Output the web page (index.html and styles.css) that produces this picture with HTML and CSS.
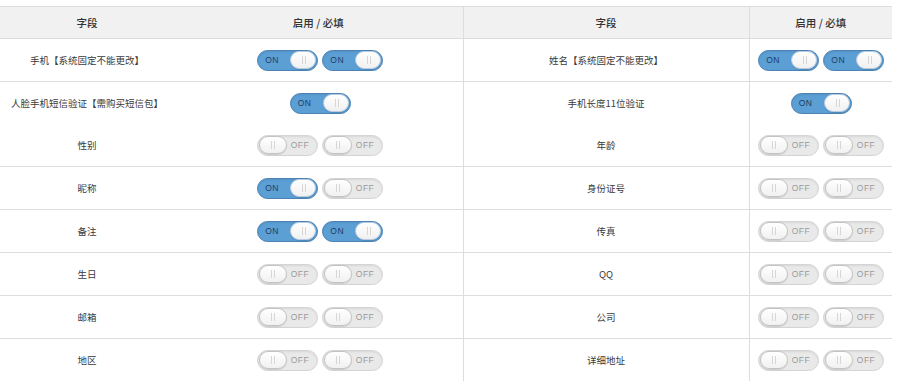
FILE: index.html
```html
<!DOCTYPE html>
<html lang="zh-CN">
  <head>
    <meta charset="UTF-8" />
    <meta name="viewport" content="width=device-width, initial-scale=1.0" />
    <title>字段设置</title>
    <link rel="stylesheet" href="styles.css">
  </head>
  <body>
    <table class="fields">
      <colgroup>
        <col class="c-name" />
        <col class="c-sw" />
        <col class="c-name2" />
        <col class="c-sw2" />
      </colgroup>
      <thead>
        <tr>
          <th>字段</th>
          <th class="split">启用 / 必填</th>
          <th class="split">字段</th>
          <th>启用 / 必填</th>
        </tr>
      </thead>
      <tbody>
        <tr>
          <td>手机【系统固定不能更改】</td>
          <td class="split sw">
            <span class="switch on"><span class="txt">ON</span><span class="knob"></span></span>
            <span class="switch on"><span class="txt">ON</span><span class="knob"></span></span>
          </td>
          <td class="split">姓名【系统固定不能更改】</td>
          <td class="sw2">
            <span class="switch on"><span class="txt">ON</span><span class="knob"></span></span>
            <span class="switch on"><span class="txt">ON</span><span class="knob"></span></span>
          </td>
        </tr>
        <tr class="no-line">
          <td>人脸手机短信验证【需购买短信包】</td>
          <td class="split sw">
            <span class="switch on"><span class="txt">ON</span><span class="knob"></span></span>
          </td>
          <td class="split">手机长度11位验证</td>
          <td class="sw2">
            <span class="switch on"><span class="txt">ON</span><span class="knob"></span></span>
          </td>
        </tr>
        <tr>
          <td>性别</td>
          <td class="split sw">
            <span class="switch"><span class="knob"></span><span class="txt">OFF</span></span>
            <span class="switch"><span class="knob"></span><span class="txt">OFF</span></span>
          </td>
          <td class="split">年龄</td>
          <td class="sw2">
            <span class="switch"><span class="knob"></span><span class="txt">OFF</span></span>
            <span class="switch"><span class="knob"></span><span class="txt">OFF</span></span>
          </td>
        </tr>
        <tr>
          <td>昵称</td>
          <td class="split sw">
            <span class="switch on"><span class="txt">ON</span><span class="knob"></span></span>
            <span class="switch"><span class="knob"></span><span class="txt">OFF</span></span>
          </td>
          <td class="split">身份证号</td>
          <td class="sw2">
            <span class="switch"><span class="knob"></span><span class="txt">OFF</span></span>
            <span class="switch"><span class="knob"></span><span class="txt">OFF</span></span>
          </td>
        </tr>
        <tr>
          <td>备注</td>
          <td class="split sw">
            <span class="switch on"><span class="txt">ON</span><span class="knob"></span></span>
            <span class="switch on"><span class="txt">ON</span><span class="knob"></span></span>
          </td>
          <td class="split">传真</td>
          <td class="sw2">
            <span class="switch"><span class="knob"></span><span class="txt">OFF</span></span>
            <span class="switch"><span class="knob"></span><span class="txt">OFF</span></span>
          </td>
        </tr>
        <tr>
          <td>生日</td>
          <td class="split sw">
            <span class="switch"><span class="knob"></span><span class="txt">OFF</span></span>
            <span class="switch"><span class="knob"></span><span class="txt">OFF</span></span>
          </td>
          <td class="split">QQ</td>
          <td class="sw2">
            <span class="switch"><span class="knob"></span><span class="txt">OFF</span></span>
            <span class="switch"><span class="knob"></span><span class="txt">OFF</span></span>
          </td>
        </tr>
        <tr>
          <td>邮箱</td>
          <td class="split sw">
            <span class="switch"><span class="knob"></span><span class="txt">OFF</span></span>
            <span class="switch"><span class="knob"></span><span class="txt">OFF</span></span>
          </td>
          <td class="split">公司</td>
          <td class="sw2">
            <span class="switch"><span class="knob"></span><span class="txt">OFF</span></span>
            <span class="switch"><span class="knob"></span><span class="txt">OFF</span></span>
          </td>
        </tr>
        <tr>
          <td>地区</td>
          <td class="split sw">
            <span class="switch"><span class="knob"></span><span class="txt">OFF</span></span>
            <span class="switch"><span class="knob"></span><span class="txt">OFF</span></span>
          </td>
          <td class="split">详细地址</td>
          <td class="sw2">
            <span class="switch"><span class="knob"></span><span class="txt">OFF</span></span>
            <span class="switch"><span class="knob"></span><span class="txt">OFF</span></span>
          </td>
        </tr>
      </tbody>
    </table>
  </body>
</html>
```

FILE: styles.css
```css
body {
  margin: 0;
  background: #fff;
  font-family: "Noto Sans CJK SC", "Noto Sans", sans-serif;
  color: #3a3a3a;
}
.fields {
  width: 892px;
  margin-top: 6px;
  border-collapse: collapse;
  table-layout: fixed;
  border-top: 1px solid #ddd;
}
.c-name {
  width: 174px;
}
.c-sw {
  width: 289px;
}
.c-name2 {
  width: 286px;
}
.c-sw2 {
  width: 143px;
}
th,
td {
  padding: 0;
  text-align: center;
  vertical-align: middle;
  border-bottom: 1px solid #ddd;
  white-space: nowrap;
  font-size: 9.5px;
}
th {
  height: 31px;
  background-color: #f1f1f1;
  font-size: 10.5px;
  font-weight: 500;
  color: #333;
}
td {
  height: 42px;
}
td.sw {
  padding-left: 4px;
}
td.sw2 {
  padding-left: 1px;
}
.split {
  border-right: 1px solid #ddd;
}
.no-line td {
  border-bottom: none;
}
.switch {
  display: inline-flex;
  align-items: center;
  justify-content: space-between;
  box-sizing: border-box;
  width: 61px;
  height: 21px;
  margin: 0 1px;
  padding: 0 1px;
  border: 1px solid #d4d4d4;
  border-radius: 11px;
  background: #e9e9e9;
  box-shadow: inset 0 1px 2px rgba(0, 0, 0, 0.08);
  vertical-align: middle;
  font-family: "Liberation Sans", "DejaVu Sans", sans-serif;
  font-size: 8.5px;
  letter-spacing: 0.5px;
}
.switch .txt {
  color: #9a9a9a;
  padding-right: 7px;
}
.switch.on {
  background: #5b9fd5;
  border-color: #4b82b3;
  padding-left: 0;
}
.switch.on .txt {
  color: #1f3e63;
  padding: 0 0 0 7px;
}
.knob {
  position: relative;
  box-sizing: border-box;
  width: 28px;
  height: 18px;
  border: 1px solid #c3c3c3;
  border-radius: 9px;
  background: linear-gradient(#ffffff, #f1f1f1);
  box-shadow: 0 1px 1px rgba(0, 0, 0, 0.12);
}
.on .knob {
  width: 26px;
  border-color: #b9cbe0;
}
.knob::before,
.knob::after {
  content: "";
  position: absolute;
  top: 4px;
  width: 1px;
  height: 8px;
  background: #d6d6d6;
}
.knob::before {
  left: 11px;
}
.knob::after {
  left: 14px;
}
```
